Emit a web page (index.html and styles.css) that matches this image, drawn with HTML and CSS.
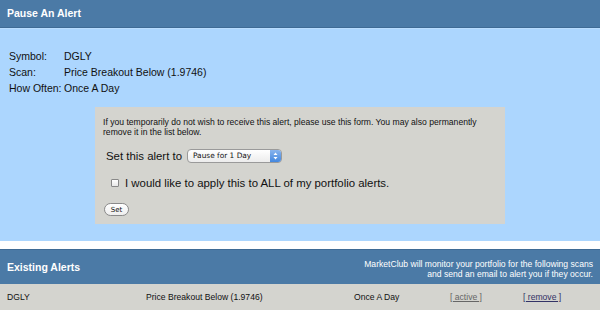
FILE: index.html
```html
<!DOCTYPE html>
<html>
<head>
<meta charset="utf-8">
<link rel="stylesheet" href="styles.css">
</head>
<body>
<div class="bar top-bar"><span class="bar-title">Pause An Alert</span></div>
<div class="main">
  <div class="info">
    <span class="lbl">Symbol:</span><span>DGLY</span>
    <span class="lbl">Scan:</span><span>Price Breakout Below (1.9746)</span>
    <span class="lbl">How Often:</span><span>Once A Day</span>
  </div>
  <form class="box">
    <p class="note">If you temporarily do not wish to receive this alert, please use this form. You may also permanently remove it in the list below.</p>
    <div class="set-row">
      <span>Set this alert to</span>
      <span class="select"><span class="select-text">Pause for 1 Day</span><span class="stepper"><svg width="11" height="12" viewBox="0 0 11 12"><path d="M5.5 2.5 L7.5 5 L3.5 5 Z M5.5 9.5 L7.5 7 L3.5 7 Z" fill="#fff"/></svg></span></span>
    </div>
    <div class="check-row">
      <span class="check"></span>
      <span>I would like to apply this to ALL of my portfolio alerts.</span>
    </div>
    <div class="btn">Set</div>
  </form>
</div>
<div class="gap"></div>
<div class="bar bottom-bar">
  <span class="bar-title">Existing Alerts</span>
  <span class="bar-note">MarketClub will monitor your portfolio for the following scans<br>and send an email to alert you if they occur.</span>
</div>
<div class="row">
  <span>DGLY</span>
  <span>Price Breakout Below (1.9746)</span>
  <span>Once A Day</span>
  <span class="link-active">[ active ]</span>
  <span class="link-remove">[ remove ]</span>
</div>
</body>
</html>
```

FILE: styles.css
```css
html, body {
  margin: 0;
  padding: 0;
  background: #ffffff;
  font-family: "Liberation Sans", Arial, sans-serif;
  color: #111;
}
.bar {
  background: #4b7aa6;
  color: #fff;
  display: flex;
  align-items: center;
  justify-content: space-between;
  box-sizing: border-box;
}
.bar-title {
  font-weight: bold;
  font-size: 10.5px;
  padding-left: 7px;
}
.top-bar {
  height: 28px;
  border-bottom: 1px solid #3f6b95;
  padding-bottom: 1px;
}
.main {
  background: #acd6fe;
  border-top: 1px solid #b9ddfe;
  padding: 19px 0 17px 0;
}
.info {
  display: grid;
  grid-template-columns: 55px auto;
  padding-left: 9px;
  font-size: 10.5px;
  line-height: 16px;
}
.box {
  display: block;
  margin: 11px 0 0 95px;
  width: 410px;
  height: 117px;
  box-sizing: border-box;
  background: #d4d4cf;
  padding: 10px 8px 0 8px;
}
.note {
  margin: 0;
  font-size: 8.6px;
  line-height: 10px;
}
.set-row {
  display: flex;
  align-items: center;
  gap: 5px;
  margin: 10px 0 0 3px;
  font-size: 11.4px;
  height: 17px;
}
.select {
  display: flex;
  align-items: center;
  justify-content: space-between;
  width: 95px;
  height: 14px;
  box-sizing: border-box;
  background: linear-gradient(#ffffff, #ececec);
  border: 1px solid #9a9a9a;
  border-radius: 4px;
  font-family: "DejaVu Sans", sans-serif;
  font-size: 7.4px;
  overflow: hidden;
}
.select-text {
  padding-left: 5px;
  color: #111;
}
.stepper {
  width: 11px;
  height: 14px;
  background: linear-gradient(#8fb8ee, #3e84de);
  display: flex;
  align-items: center;
  justify-content: center;
}
.stepper svg { display: block; }
.check-row {
  display: flex;
  align-items: center;
  gap: 6px;
  margin: 12px 0 0 8px;
  font-size: 11.4px;
  height: 14px;
}
.check {
  width: 6px;
  height: 6px;
  border: 1px solid #888;
  background: linear-gradient(#fff, #e8e8e8);
  border-radius: 1px;
}
.btn {
  display: flex;
  align-items: center;
  justify-content: center;
  margin: 13px 0 0 1px;
  width: 25px;
  height: 13px;
  box-sizing: border-box;
  border: 1px solid #8a8a8a;
  border-radius: 7px;
  background: linear-gradient(#ffffff, #eeeeee);
  font-family: "DejaVu Sans", sans-serif;
  font-size: 7px;
}
.gap {
  height: 8px;
  background: #fff;
}
.bottom-bar {
  height: 35px;
  border-top: 1px solid #3f6b95;
}
.bar-note {
  font-size: 8.6px;
  line-height: 10px;
  text-align: right;
  padding-right: 7px;
  padding-top: 3px;
}
.row {
  background: #d4d4cf;
  height: 26px;
  display: grid;
  grid-template-columns: 139px 208px 96px 73px auto;
  align-items: center;
  padding-left: 7px;
  font-size: 8.6px;
}
.link-active {
  color: #666;
  text-decoration: underline;
}
.link-remove {
  color: #333366;
  text-decoration: underline;
}
```
